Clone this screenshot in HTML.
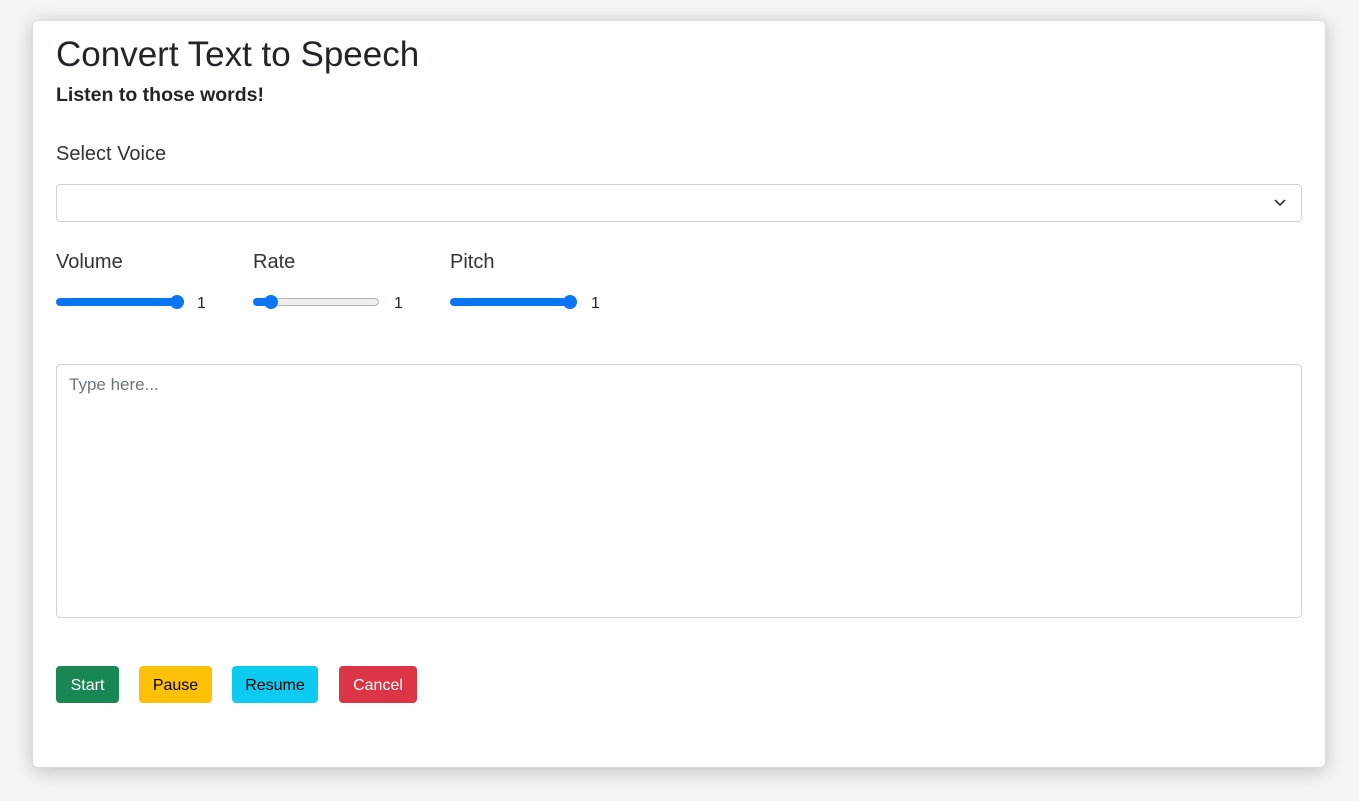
<!DOCTYPE html>
<html><head><style>
body{margin:0;width:1359px;height:801px;background:#f4f5f7;font-family:"Liberation Sans",sans-serif;color:#212529;position:relative;overflow:hidden}
.a{position:absolute}
.card{left:32px;top:20px;width:1294px;height:748px;background:#fff;border-radius:6px;box-shadow:0 3px 18px rgba(0,0,0,.22);border:1px solid #ddd;box-sizing:border-box}
.t{font-size:16px;line-height:1}
.lbl{font-size:20px;color:#333}
.track{height:8px;border-radius:4px;top:298px}
.thumb{width:14px;height:14px;border-radius:7px;background:#0a75f5;top:295px}
.btn{top:666px;height:37px;border-radius:4px;font-size:16px;line-height:39px;text-align:center}
</style></head><body>
<div class="a card"></div>
<div class="a" style="left:56px;top:35px;font-size:35px;line-height:40px">Convert Text to Speech</div>
<div class="a" style="left:56px;top:84px;font-size:19.5px;font-weight:bold;line-height:23px">Listen to those words!</div>
<div class="a lbl" style="left:56px;top:143px">Select Voice</div>
<div class="a" style="left:56px;top:184px;width:1246px;height:38px;border:1px solid #ced4da;border-radius:4px;box-sizing:border-box"></div>
<svg class="a" style="left:1274px;top:198px" width="12" height="10"><path d="M1 2l5 5 5-5" fill="none" stroke="#333" stroke-width="1.6"/></svg>
<div class="a lbl" style="left:56px;top:251px">Volume</div>
<div class="a lbl" style="left:253px;top:251px">Rate</div>
<div class="a lbl" style="left:450px;top:251px">Pitch</div>
<div class="a track" style="left:56px;width:126px;background:#0a75f5"></div>
<div class="a thumb" style="left:170px"></div>
<div class="a t" style="left:197px;top:296px">1</div>
<div class="a track" style="left:253px;width:126px;background:#efefef;border:1px solid #b5b5b5;box-sizing:border-box"></div>
<div class="a track" style="left:253px;width:16px;background:#0a75f5"></div>
<div class="a thumb" style="left:264px"></div>
<div class="a t" style="left:394px;top:296px">1</div>
<div class="a track" style="left:450px;width:126px;background:#0a75f5"></div>
<div class="a thumb" style="left:563px"></div>
<div class="a t" style="left:591px;top:296px">1</div>
<div class="a" style="left:56px;top:364px;width:1246px;height:254px;border:1px solid #ced4da;border-radius:4px;box-sizing:border-box"></div>
<div class="a" style="left:69px;top:375px;color:#6c757d;font-size:17px">Type here...</div>
<div class="a btn" style="left:56px;width:63px;background:#198754;color:#fff">Start</div>
<div class="a btn" style="left:139px;width:73px;background:#ffc107;color:#000">Pause</div>
<div class="a btn" style="left:232px;width:86px;background:#0dcaf0;color:#000">Resume</div>
<div class="a btn" style="left:339px;width:78px;background:#dc3545;color:#fff">Cancel</div>
</body></html>
